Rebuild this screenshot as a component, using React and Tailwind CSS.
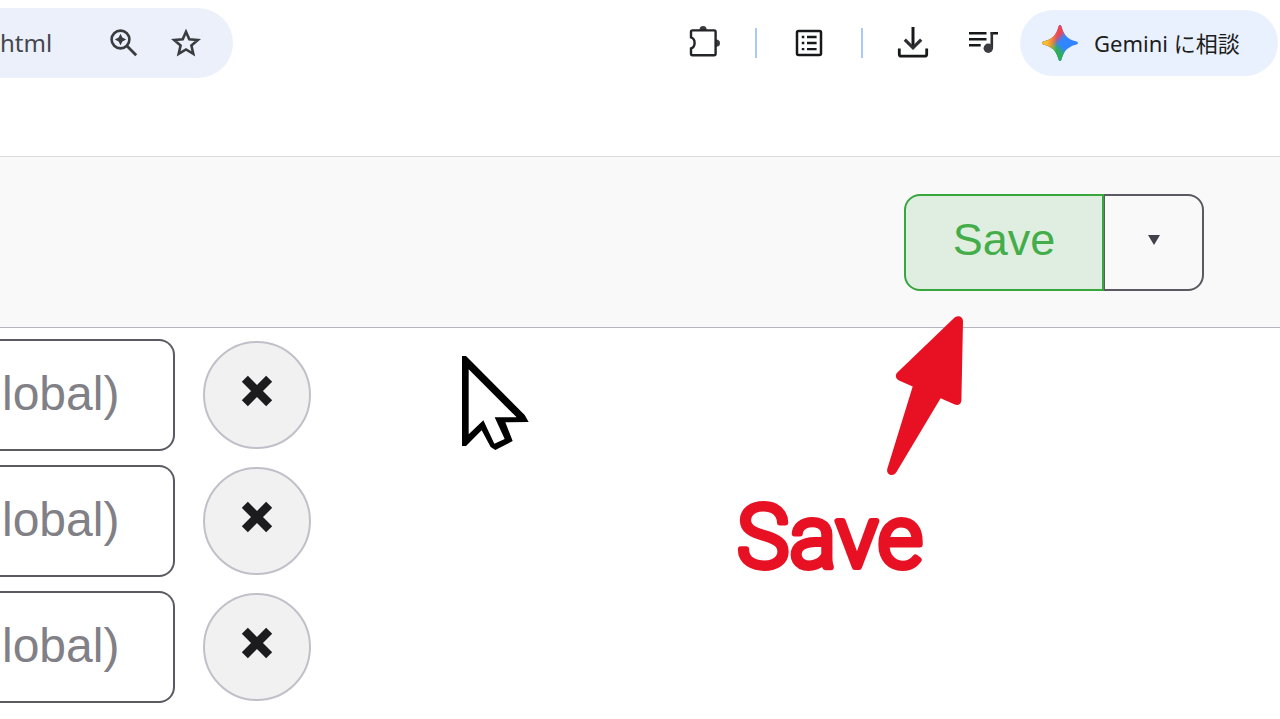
const rows = ["first", "second", "third"];

function ZoomIcon() {
  return (
    <svg viewBox="0 0 28 28" className="h-7 w-7" fill="none" aria-hidden="true">
      <circle cx="10.5" cy="10.5" r="8.9" stroke="#3a3c40" strokeWidth="2.6" />
      <path d="M17 17 26.2 26.2" stroke="#3a3c40" strokeWidth="2.8" />
      <path d="M10.5 4.8 12.4 8.6 16.2 10.5 12.4 12.4 10.5 16.2 8.6 12.4 4.8 10.5 8.6 8.6Z" fill="#3a3c40" />
    </svg>
  );
}

function StarIcon() {
  return (
    <svg viewBox="0 0 30 28" className="h-7 w-[30px]" fill="none" aria-hidden="true">
      <path
        d="M15 2.8 18.3 10.3 26.8 11 20.4 16.5 22.3 24.8 15 20.4 7.7 24.8 9.6 16.5 3.2 11 11.7 10.3Z"
        stroke="#3a3c40"
        strokeWidth="2.6"
      />
    </svg>
  );
}

function PuzzleIcon() {
  return (
    <svg viewBox="0 0 32 32" className="h-8 w-8" aria-hidden="true">
      <path d="M10.5 5a3.6 4 0 0 1 7.2 0ZM27 14.6a4 3.6 0 0 1 0 7.2Z" fill="#3a3c40" />
      <path
        d="M3.4 5.4H25.2Q26.6 5.4 26.6 6.8V28.8Q26.6 30.2 25.2 30.2H3.4Q2 30.2 2 28.8V23.4C4.2 22.7 5.6 20.4 5.6 17.9S4.2 13 2 12.3V6.8Q2 5.4 3.4 5.4Z"
        fill="none"
        stroke="#242529"
        strokeWidth="2.4"
      />
    </svg>
  );
}

function ListIcon() {
  return (
    <svg viewBox="0 0 28 28" className="h-7 w-7" fill="none" aria-hidden="true">
      <rect x="2" y="2" width="24" height="24" rx="1.5" stroke="#17181a" strokeWidth="2.5" />
      <path d="M6.8 8h2.5M6.8 14h2.5M6.8 20.2h2.5M12 8h9.6M12 14h9.6M12 20.2h9.6" stroke="#17181a" strokeWidth="2.3" />
    </svg>
  );
}

function DownloadIcon() {
  return (
    <svg viewBox="0 0 32 32" className="h-8 w-8" fill="none" aria-hidden="true">
      <path d="M16 0V20" stroke="#17181a" strokeWidth="3" />
      <path d="M7.8 12.6 16 20.8 24.2 12.6" stroke="#2d2e31" strokeWidth="3.2" />
      <path d="M2.3 21.4V27.2Q2.3 29.2 4.3 29.2H27.7Q29.7 29.2 29.7 27.2V21.4" stroke="#17181a" strokeWidth="2.8" />
    </svg>
  );
}

function MusicIcon() {
  return (
    <svg viewBox="0 0 32 24" className="h-6 w-8" fill="none" aria-hidden="true">
      <path d="M1 2.2H18.5M1 8.2H18.5M1 14.2H12.7M22.6 2.2H30" stroke="#17181a" strokeWidth="2.5" />
      <path d="M23.8 1V17.5" stroke="#2d2e31" strokeWidth="2.6" />
      <circle cx="20.3" cy="17.2" r="4.7" fill="#3a3c40" />
    </svg>
  );
}

function GeminiIcon() {
  const star = "M18 0C19.2 0 19.5 1.5 20 3.2C22 10 26 14 32.8 16C34.5 16.5 36 16.8 36 18S34.5 19.5 32.8 20C26 22 22 26 20 32.8C19.5 34.5 19.2 36 18 36S16.5 34.5 16 32.8C14 26 10 22 3.2 20C1.5 19.5 0 19.2 0 18S1.5 16.5 3.2 16C10 14 14 10 16 3.2C16.5 1.5 16.8 0 18 0Z";
  return (
    <svg viewBox="0 0 36 36" className="h-9 w-9" aria-hidden="true">
      <defs>
        <linearGradient id="gem-red" x1="13" y1="8" x2="20" y2="15" gradientUnits="userSpaceOnUse">
          <stop offset="0.35" stopColor="#f0444e" />
          <stop offset="1" stopColor="#f0444e" stopOpacity="0" />
        </linearGradient>
        <linearGradient id="gem-yellow" x1="3" y1="18" x2="15" y2="19" gradientUnits="userSpaceOnUse">
          <stop offset="0.2" stopColor="#f6bd2c" />
          <stop offset="1" stopColor="#f6bd2c" stopOpacity="0" />
        </linearGradient>
        <linearGradient id="gem-green" x1="13" y1="28" x2="20" y2="21" gradientUnits="userSpaceOnUse">
          <stop offset="0.35" stopColor="#2fae57" />
          <stop offset="1" stopColor="#2fae57" stopOpacity="0" />
        </linearGradient>
      </defs>
      <path d={star} fill="#3186ff" />
      <path d={star} fill="url(#gem-green)" />
      <path d={star} fill="url(#gem-red)" />
      <path d={star} fill="url(#gem-yellow)" />
    </svg>
  );
}

function CrossIcon() {
  return (
    <svg viewBox="0 0 30 30" className="h-8 w-8" aria-hidden="true">
      <path d="M3.6 3.6 26.4 26.4M26.4 3.6 3.6 26.4" stroke="#1c1b1d" strokeWidth="8" />
    </svg>
  );
}

function BrowserBar() {
  return (
    <header className="flex h-[156px] items-start justify-between pt-2">
      <div className="flex h-[70px] w-[233px] items-center rounded-r-full bg-[#ebf0fa]">
        <span className="w-[110px] text-2xl text-[#45474d]">html</span>
        <button type="button" aria-label="Zoom" className="mr-[33px]">
          <ZoomIcon />
        </button>
        <button type="button" aria-label="Bookmark">
          <StarIcon />
        </button>
      </div>
      <div className="flex h-[70px] items-center pr-0.5">
        <button type="button" aria-label="Extensions" className="pb-1"><PuzzleIcon /></button>
        <span className="mx-[34px] h-[30px] w-0.5 bg-[#a9c9fb]" />
        <button type="button" aria-label="Reading list" className="mx-1"><ListIcon /></button>
        <span className="mx-[34px] h-[30px] w-0.5 bg-[#a9c9fb]" />
        <button type="button" aria-label="Downloads"><DownloadIcon /></button>
        <button type="button" aria-label="Media" className="ml-[39px] mr-5"><MusicIcon /></button>
        <button type="button" className="flex h-[66px] w-[258px] items-center gap-4 rounded-full bg-[#eaf1fe] pl-[22px] text-[22px] text-[#1c1d20]">
          <GeminiIcon />
          <span className="whitespace-nowrap">Gemini に相談</span>
        </button>
      </div>
    </header>
  );
}

function Annotation() {
  return (
    <svg
      viewBox="723 316 240 300"
      className="pointer-events-none absolute right-[241px] top-[122px] z-10 h-[300px] w-[240px] text-[#e81123]"
      role="img"
      aria-label="Arrow pointing at Save"
    >
      <path
        d="M954.6 317.6C958.5 314.5 963.2 317 963 321.5L961.4 400.5C961.2 404.3 958 405.8 954.8 404.6L940.6 398.3L896.2 472.5C892.5 477.5 885.6 474.3 887.4 468.6L912.7 386.6L899 380.4C895.2 378.2 895 374.8 897.6 372.3Z"
        fill="currentColor"
      />
      <text
        x="737"
        y="567"
        fill="currentColor"
        stroke="currentColor"
        strokeWidth="6"
        strokeLinejoin="round"
        className="font-[Roboto,sans-serif] text-[88px] font-light"
      >
        Save
      </text>
    </svg>
  );
}

function Toolbar() {
  return (
    <div className="flex h-[172px] items-center justify-end border-y border-t-[#dcdcde] border-b-[#b5b5bd] bg-[#f9f9fa] pr-[76px]">
      <div className="relative flex h-[97px]">
        <button
          type="button"
          className="w-[200px] rounded-l-2xl border-2 border-[#37a63d] bg-[#e0eee1] pb-1 text-[45px] text-[#43ad49]"
        >
          Save
        </button>
        <button
          type="button"
          aria-label="More save options"
          className="flex w-[100px] items-center justify-center rounded-r-2xl border-2 border-l border-[#5b5a62] pb-1"
        >
          <svg viewBox="0 0 12 10" className="h-2.5 w-3" aria-hidden="true">
            <path d="M0 0H12L6 10Z" fill="#42414a" />
          </svg>
        </button>
        <Annotation />
      </div>
    </div>
  );
}

function Pointer() {
  return (
    <svg viewBox="66 45 201 282" className="pointer-events-none absolute left-[462px] top-7 h-[94px] w-[67px]" aria-hidden="true">
      <path d="M66 45H78L254 222L266 243L196 244L218 300L166 327L152 318L125 268L78 315H66Z" fill="#000" />
      <path d="M86 85 230 229H164L194 294 163 308 130 238 86 280Z" fill="#fff" />
    </svg>
  );
}

export default function App() {
  return (
    <div className="min-h-screen overflow-hidden bg-white font-['Noto_Sans','Noto_Sans_CJK_JP',sans-serif]">
      <BrowserBar />
      <div className="font-['Liberation_Sans',Arial,sans-serif]">
        <Toolbar />
        <main className="relative flex flex-col gap-3.5 pt-[11px]">
          {rows.map((row) => (
            <div key={row} className="flex items-center gap-7">
              <input
                type="text"
                placeholder="lobal)"
                aria-label={`Value of the ${row} row`}
                className="h-28 w-[175px] rounded-r-2xl border-2 border-l-0 border-[#5b5a62] bg-white pb-1 pl-0.5 text-[48px] text-[#808086] placeholder:text-[#808086]"
              />
              <button
                type="button"
                aria-label={`Remove the ${row} row`}
                className="flex h-[108px] w-[108px] items-center justify-center rounded-full border-2 border-[#c0c0c9] bg-[#f1f1f2] pb-2"
              >
                <CrossIcon />
              </button>
            </div>
          ))}
          <Pointer />
        </main>
      </div>
    </div>
  );
}
